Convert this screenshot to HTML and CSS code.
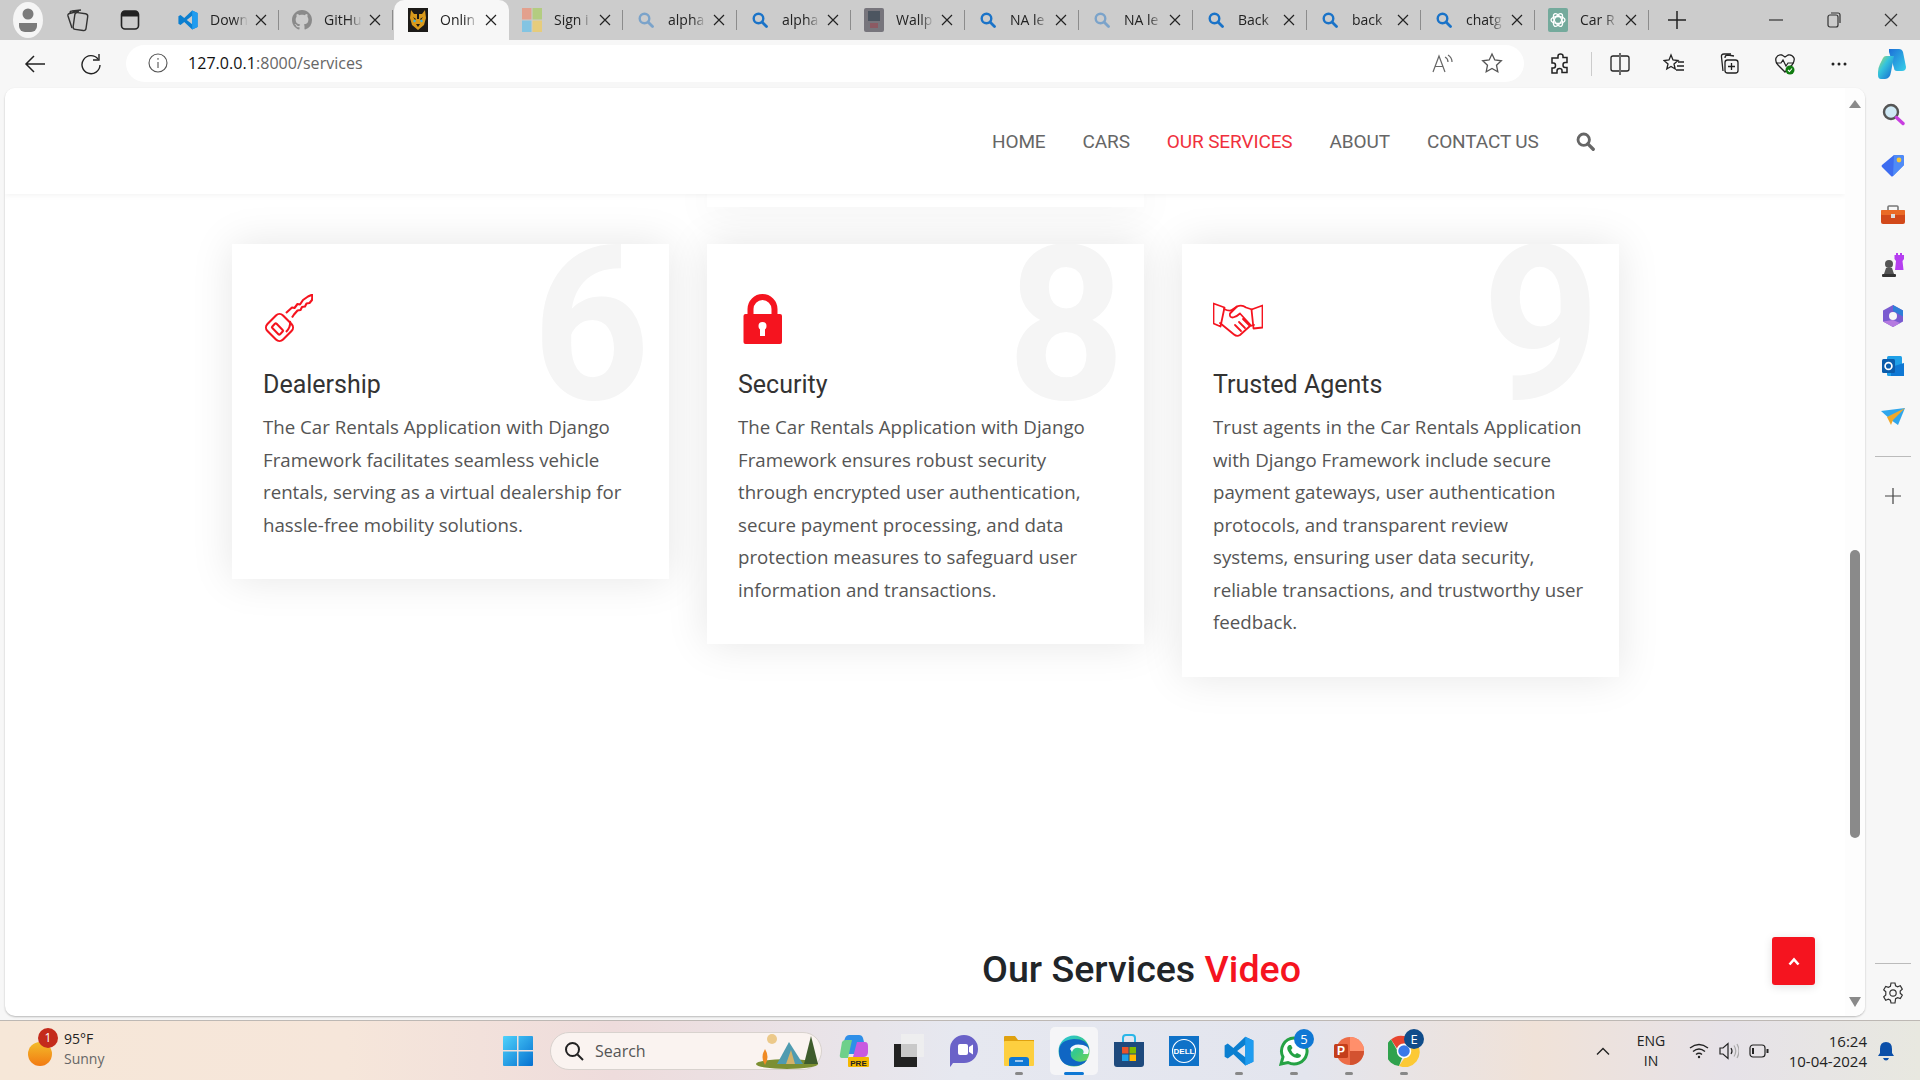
FILE: index.html
```html
<!DOCTYPE html>
<html>
<head>
    <title>Our Services</title>
    <meta charset="utf-8">
    <link rel="stylesheet" href="styles.css">
</head>
<body>
    <svg class="sprites" width="0" height="0">
        <symbol id="i-vscode" viewBox="0 0 24 24">
            <path fill="#0b7fd0" fill-rule="evenodd" d="M17 0.5 7.5 9.5 3 6 0.5 7.5v9L3 18l4.500-3.500 9.500 9 6.500-3v-17zM17 7l-6.500 5 6.500 5z"/>
            <path fill="#1f9cf0" d="M17 0.500l6.500 3v17l-6.500 3z"/>
        </symbol>
        <symbol id="i-github" viewBox="0 0 16 16">
            <path fill="#8a8a8a" d="M8 0C3.58 0 0 3.58 0 8c0 3.54 2.29 6.53 5.47 7.59.4.07.55-.17.55-.38 0-.19-.01-.82-.01-1.490-2.010.37-2.530-.49-2.690-.94-.09-.23-.48-.94-.82-1.130-.28-.15-.68-.52-.01-.53.63-.01 1.080.58 1.230.82.72 1.210 1.870.87 2.330.66.07-.52.28-.87.51-1.070-1.780-.2-3.640-.89-3.640-3.950 0-.87.31-1.590.82-2.150-.08-.2-.36-1.020.08-2.120 0 0 .67-.21 2.200.82.64-.18 1.320-.27 2-.27s1.360.09 2 .27c1.530-1.040 2.200-.82 2.200-.82.44 1.100.16 1.920.08 2.120.51.56.82 1.270.82 2.150 0 3.070-1.870 3.750-3.650 3.950.29.25.54.73.54 1.480 0 1.070-.01 1.930-.01 2.200 0 .21.15.46.55.38A8.010 8.010 0 0016 8c0-4.420-3.580-8-8-8z"/>
        </symbol>
        <symbol id="i-tiger" viewBox="0 0 20 24">
            <rect width="20" height="24" fill="#1c1a18"/>
            <path fill="#d99a1c" d="M3 2l3 4h8l3-4 1 8-2 7-6 5-6-5-2-7z"/>
            <path fill="#1c1a18" d="M9 6h2v5H9zM5 9l3 2-1 1zM15 9l-3 2 1 1zM8 16h4l-2 3z"/>
            <circle cx="6.500" cy="13" r="1.200" fill="#37b4e8"/>
            <circle cx="13.500" cy="13" r="1.200" fill="#37b4e8"/>
        </symbol>
        <symbol id="i-ms" viewBox="0 0 20 24">
            <rect x="0" y="0" width="9.500" height="11.500" fill="#e3a08d"/>
            <rect x="10.500" y="0" width="9.500" height="11.500" fill="#b3cc80"/>
            <rect x="0" y="12.500" width="9.500" height="11.500" fill="#83c4e2"/>
            <rect x="10.500" y="12.500" width="9.500" height="11.500" fill="#e6cc7c"/>
        </symbol>
        <symbol id="i-glass" viewBox="0 0 16 16">
            <circle cx="6.500" cy="6.500" r="4.800" fill="none" stroke="currentColor" stroke-width="2.400"/>
            <path d="M10 10l4.500 4.500" stroke="currentColor" stroke-width="2.800" stroke-linecap="round"/>
        </symbol>
        <symbol id="i-wall" viewBox="0 0 20 24">
            <rect width="20" height="24" rx="2" fill="#77757c"/>
            <rect x="4" y="3" width="12" height="10" fill="#4c5560"/>
            <rect x="6" y="15" width="8" height="5" fill="#8c5a63"/>
        </symbol>
        <symbol id="i-gpt" viewBox="0 0 20 24">
            <rect width="20" height="24" rx="2" fill="#74aa9c"/>
            <g fill="none" stroke="#fff" stroke-width="1.300">
                <ellipse cx="10" cy="12" rx="7" ry="3.500" transform="rotate(60 10 12)"/>
                <ellipse cx="10" cy="12" rx="7" ry="3.500" transform="rotate(-60 10 12)"/>
                <ellipse cx="10" cy="12" rx="7" ry="3.500"/>
            </g>
        </symbol>
        <symbol id="i-close" viewBox="0 0 12 12">
            <path d="M1 1l10 10M11 1 1 11" stroke="#222" stroke-width="1.200"/>
        </symbol>
    </svg>

    <div class="browser">
        <div class="tabstrip">
            <div class="strip-left">
                <span class="avatar">
                    <svg width="22" height="26" viewBox="0 0 22 26"><circle cx="11" cy="7" r="5.500" fill="#7b7b7b"/><path d="M2 16h18v3a6 6 0 0 1-6 6H8a6 6 0 0 1-6-6z" fill="#7b7b7b"/></svg>
                </span>
                <svg class="strip-icon" width="24" height="24" viewBox="0 0 24 24" fill="none" stroke="#333" stroke-width="1.400"><rect x="9" y="5" width="13" height="17" rx="2.500" transform="rotate(8 15 13)"/><path d="M7 20 3 8q-.5-2 1.500-2.500L14 3M5 5q0-2 2-2l9-1"/></svg>
                <svg class="strip-icon" width="22" height="24" viewBox="0 0 22 24"><rect x="2.500" y="3" width="17" height="18" rx="3.500" fill="none" stroke="#222" stroke-width="1.600"/><path d="M2.500 6.500a3.500 3.500 0 0 1 3.500-3.500h10a3.500 3.500 0 0 1 3.500 3.500v2h-17z" fill="#222"/></svg>
            </div>
            <div class="tab"><svg class="favicon"><use href="#i-vscode"/></svg><span class="tab-title">Down</span><svg class="tab-close"><use href="#i-close"/></svg></div>
            <div class="tab"><svg class="favicon"><use href="#i-github"/></svg><span class="tab-title">GitHu</span><svg class="tab-close"><use href="#i-close"/></svg></div>
            <div class="tab tab-active"><svg class="favicon"><use href="#i-tiger"/></svg><span class="tab-title">Onlin</span><svg class="tab-close"><use href="#i-close"/></svg></div>
            <div class="tab"><svg class="favicon"><use href="#i-ms"/></svg><span class="tab-title">Sign i</span><svg class="tab-close"><use href="#i-close"/></svg></div>
            <div class="tab"><svg class="favicon glass faded"><use href="#i-glass"/></svg><span class="tab-title">alpha</span><svg class="tab-close"><use href="#i-close"/></svg></div>
            <div class="tab"><svg class="favicon glass"><use href="#i-glass"/></svg><span class="tab-title">alpha</span><svg class="tab-close"><use href="#i-close"/></svg></div>
            <div class="tab"><svg class="favicon"><use href="#i-wall"/></svg><span class="tab-title">Wallp</span><svg class="tab-close"><use href="#i-close"/></svg></div>
            <div class="tab"><svg class="favicon glass"><use href="#i-glass"/></svg><span class="tab-title">NA le</span><svg class="tab-close"><use href="#i-close"/></svg></div>
            <div class="tab"><svg class="favicon glass faded"><use href="#i-glass"/></svg><span class="tab-title">NA le</span><svg class="tab-close"><use href="#i-close"/></svg></div>
            <div class="tab"><svg class="favicon glass"><use href="#i-glass"/></svg><span class="tab-title">Back</span><svg class="tab-close"><use href="#i-close"/></svg></div>
            <div class="tab"><svg class="favicon glass"><use href="#i-glass"/></svg><span class="tab-title">back</span><svg class="tab-close"><use href="#i-close"/></svg></div>
            <div class="tab"><svg class="favicon glass"><use href="#i-glass"/></svg><span class="tab-title">chatg</span><svg class="tab-close"><use href="#i-close"/></svg></div>
            <div class="tab tab-last"><svg class="favicon"><use href="#i-gpt"/></svg><span class="tab-title">Car R</span><svg class="tab-close"><use href="#i-close"/></svg></div>
            <svg class="new-tab" width="18" height="18" viewBox="0 0 18 18"><path d="M9 0v18M0 9h18" stroke="#222" stroke-width="1.500"/></svg>
            <div class="window-btns">
                <svg width="14" height="14" viewBox="0 0 14 14"><path d="M0 7h14" stroke="#333" stroke-width="1.200"/></svg>
                <svg width="14" height="16" viewBox="0 0 14 16" fill="none" stroke="#333" stroke-width="1.200"><rect x="1" y="3" width="10" height="12" rx="2"/><path d="M4 1h7q2 0 2 2v8"/></svg>
                <svg width="14" height="14" viewBox="0 0 14 14"><path d="M1 1l12 12M13 1 1 13" stroke="#333" stroke-width="1.200"/></svg>
            </div>
        </div>

        <div class="toolbar">
            <svg class="tool-back" width="22" height="20" viewBox="0 0 22 20" fill="none" stroke="#222" stroke-width="1.500"><path d="M21 10H2M10 2l-8 8 8 8"/></svg>
            <svg class="tool-reload" width="22" height="22" viewBox="0 0 22 22" fill="none" stroke="#222" stroke-width="1.400"><path d="M18 6a9 9 0 1 0 2 6"/><path d="M19 1v6h-6"/></svg>
            <div class="addressbar">
                <svg width="20" height="20" viewBox="0 0 20 20" fill="none" stroke="#555" stroke-width="1.100"><circle cx="10" cy="10" r="9"/><path d="M10 9v6M10 5v1.800"/></svg>
                <div class="url"><span class="url-host">127.0.0.1</span>:8000/services</div>
                <svg class="read-aloud" width="22" height="20" viewBox="0 0 22 20" fill="none" stroke="#666" stroke-width="1.200"><path d="M1 19 7 3l6 16M3 13.500h8M13 4q3 1.500 3 5M16 2q4 2.500 4 7"/></svg>
                <svg width="22" height="22" viewBox="0 0 22 22" fill="none" stroke="#555" stroke-width="1.300"><path d="M11 2l2.800 6 6.500.8-4.800 4.400 1.300 6.500-5.800-3.300-5.800 3.300 1.300-6.500L1.700 8.800 8.200 8z"/></svg>
            </div>
            <div class="tool-group">
                <svg width="20" height="22" viewBox="0 0 20 22" fill="none" stroke="#222" stroke-width="1.500"><path d="M8 3q0-2 2.500-2T13 3v1.500h4v5h-2q-2 0-2 2.500t2 2.500h2v5H12v-2q0-2-2.500-2T7 18v2H2v-5h1.500q2 0 2-2.500T3.500 10H2V5h6z"/></svg>
                <span class="tool-sep"></span>
                <svg width="20" height="22" viewBox="0 0 20 22" fill="none" stroke="#222" stroke-width="1.300"><path d="M10 0v22M9 3H3q-2 0-2 2v11q0 2 2 2h6M11 3h6q2 0 2 2v11q0 2-2 2h-6"/></svg>
                <svg width="22" height="22" viewBox="0 0 22 22" fill="none" stroke="#222" stroke-width="1.300"><path d="M8 2l2 5 5 .5-4 3.500 1.200 5L8 13.500 3.800 16 5 11 1 7.500 6 7zM15 9h6M14 13h7M13 17h8"/></svg>
                <svg width="22" height="24" viewBox="0 0 22 24" fill="none" stroke="#222" stroke-width="1.300"><path d="M13 2H6Q3 2 3.500 5L5 19"/><path d="M16 4 10 3Q7 3 7 6"/><rect x="7" y="8" width="13" height="13" rx="2.500"/><path d="M13.500 11v7M10 14.500h7"/></svg>
                <svg width="24" height="24" viewBox="0 0 24 24"><path d="M5 13q-3-3-2-7 2-4 6-3l3 2 3-2q4-1 6 3 1 3-2 7l-7 7z" fill="none" stroke="#222" stroke-width="1.300"/><path d="M3 11h5l2-3 3 6 2-3h6" fill="none" stroke="#222" stroke-width="1.200"/><circle cx="17" cy="18" r="4.500" fill="#107c10"/><path d="M15 18l1.500 1.500 2.500-3" fill="none" stroke="#fff" stroke-width="1.100"/></svg>
                <svg width="18" height="6" viewBox="0 0 18 6" fill="#222"><circle cx="3" cy="3" r="1.500"/><circle cx="9" cy="3" r="1.500"/><circle cx="15" cy="3" r="1.500"/></svg>
            </div>
            <svg class="tool-copilot" width="30" height="32" viewBox="0 0 30 32">
                <defs>
                    <linearGradient id="cop1" x1="0" y1="0" x2="1" y2="1"><stop offset="0" stop-color="#1b6fd8"/><stop offset="1" stop-color="#38d0e8"/></linearGradient>
                    <linearGradient id="cop2" x1="0" y1="0" x2="1" y2="1"><stop offset="0" stop-color="#b8dc5c"/><stop offset=".4" stop-color="#35c4dc"/><stop offset="1" stop-color="#1560d0"/></linearGradient>
                </defs>
                <path d="M12 1h10q3 0 4 3l3 15q0 4-4 4h-5q-3 0-3-3L12 4q0-3 0-3z" fill="url(#cop1)"/>
                <path d="M9 8h8l-3 16q-1 7-6 7H4q-3 0-3-4V24q0-4 2-8l3-6q1-2 3-2z" fill="url(#cop2)"/>
            </svg>
        </div>

        <div class="middle">
            <div class="viewport">
                <div class="page">
                    <nav class="navbar">
                        <a>HOME</a>
                        <a>CARS</a>
                        <a class="active">OUR SERVICES</a>
                        <a>ABOUT</a>
                        <a>CONTACT US</a>
                        <svg class="nav-search"><use href="#i-glass"/></svg>
                    </nav>
                    <div class="service-row stub-row">
                        <div class="card-stub"></div>
                    </div>
                    <div class="service-row">
                        <div class="service-card">
                            <span class="service-num">6</span>
                            <svg class="service-icon" viewBox="0 0 50 50" fill="none" stroke="#f5141f" stroke-width="2.100" stroke-linejoin="round">
                                <rect x="5.500" y="22.500" width="22" height="22" rx="5" transform="rotate(45 16.500 33.500)"/>
                                <rect x="9" y="32" width="11" height="6" rx="1.200" transform="rotate(45 14.500 35)"/>
                                <path d="M27 27q1 6-4 11"/>
                                <path d="M23 19l6-5.500 2.500.5 3-4 2.500.5 3-4.500L45 2.500 49.500.5 49 6l-2.500 3-3 .5-1.500 3-3 .5-1.500 3-3 .5-3.500 4-2 3"/>
                            </svg>
                            <h3>Dealership</h3>
                            <p>The Car Rentals Application with Django Framework facilitates seamless vehicle rentals, serving as a virtual dealership for hassle-free mobility solutions.</p>
                        </div>
                        <div class="service-card">
                            <span class="service-num">8</span>
                            <svg class="service-icon" viewBox="0 0 50 50">
                                <path d="M12.500 20v-5a12 12 0 0 1 24 0v5" fill="none" stroke="#f5141f" stroke-width="6"/>
                                <rect x="5.500" y="20" width="38.500" height="30" rx="2" fill="#f5141f"/>
                                <circle cx="24.500" cy="32" r="4" fill="#fff"/>
                                <rect x="22" y="33" width="5" height="9" fill="#fff"/>
                            </svg>
                            <h3>Security</h3>
                            <p>The Car Rentals Application with Django Framework ensures robust security through encrypted user authentication, secure payment processing, and data protection measures to safeguard user information and transactions.</p>
                        </div>
                        <div class="service-card">
                            <span class="service-num">9</span>
                            <svg class="service-icon" viewBox="0 0 50 50" fill="none" stroke="#f5141f" stroke-width="1.800" stroke-linejoin="round" stroke-linecap="round">
                                <path d="M0.500 9.500l11 4-4 19-7-3zM49.500 11.500l-11 4 2 19 9-1z"/>
                                <path d="M11 15q4 2 7 1.500l6-4q5-2 9 1l6 2M41 31l-4 1-10 9q-3 2-6-.5L7 29"/>
                                <path d="M24 12.500l-7 7q-1 4 3 4 4-1 7-4l11 12M22 31l6 6M26 28l6 6M30 25l6 6"/>
                            </svg>
                            <h3>Trusted Agents</h3>
                            <p>Trust agents in the Car Rentals Application with Django Framework include secure payment gateways, user authentication protocols, and transparent review systems, ensuring user data security, reliable transactions, and trustworthy user feedback.</p>
                        </div>
                    </div>
                    <h2 class="section-title">Our Services <span>Video</span></h2>
                </div>
                <div class="scrollbar">
                    <span class="arrow-up"></span>
                    <span class="thumb"></span>
                    <span class="arrow-down"></span>
                </div>
                <a class="back-top">
                    <svg width="12" height="9" viewBox="0 0 12 9"><path d="M1.500 7.500 6 2.500l4.500 5" fill="none" stroke="#fff" stroke-width="2.600"/></svg>
                </a>
            </div>

            <div class="sidebar">
                <span class="side-item"><svg width="24" height="24" viewBox="0 0 24 24"><circle cx="10" cy="10" r="7" fill="#cfe9f5" stroke="#555" stroke-width="2.400"/><path d="M15.500 15.500 22 21.500" stroke="#c83ee0" stroke-width="3.400" stroke-linecap="round"/></svg></span>
                <span class="side-item"><svg width="24" height="24" viewBox="0 0 24 24"><path d="M13 2h8q2 0 2 2v8L12 23q-1 1-2 0L1 14q-1-1 0-2z" fill="#3d6cf0"/><path d="M13 2h8q2 0 2 2v8L12 23z" fill="#4f8bf7"/><circle cx="18" cy="7" r="2.400" fill="#f6c83a"/></svg></span>
                <span class="side-item"><svg width="26" height="20" viewBox="0 0 26 20"><path d="M8 5V2q0-1 1-1h8q1 0 1 1v3" fill="none" stroke="#777" stroke-width="1.600"/><rect x="1" y="5" width="24" height="14" rx="2" fill="#d2491a"/><rect x="1" y="5" width="24" height="5" rx="1" fill="#ea6a26"/><rect x="11" y="9" width="4" height="4" fill="#ddd"/></svg></span>
                <span class="side-item"><svg width="24" height="26" viewBox="0 0 24 26"><path d="M15 1h2v2h2V1h2v2h2v4l-1.500 2 1 9H14l1-9L13.500 7V3H15z" fill="#b53ef0"/><circle cx="8" cy="12" r="4" fill="#555"/><path d="M5 16h6l2 6H3z" fill="#555"/><rect x="1" y="22" width="14" height="3" rx="1" fill="#333"/></svg></span>
                <span class="side-item"><svg width="22" height="24" viewBox="0 0 22 24"><path d="M11 1l10 5.500v11L11 23 1 17.500v-11z" fill="#7a5bd0"/><path d="M11 1l10 5.500v6L11 7z" fill="#2f7fd8"/><path d="M1 17.500 11 23l7-4-7-3z" fill="#b57ae0"/><circle cx="11" cy="12" r="4" fill="#f7f7f7"/></svg></span>
                <span class="side-item"><svg width="22" height="22" viewBox="0 0 22 22"><rect x="5" y="1" width="15" height="20" rx="1.500" fill="#1fa0e8"/><path d="M9 12l13-4v13H9z" fill="#0f78d4"/><rect x="0" y="4" width="13" height="14" rx="1.500" fill="#0b5cab"/><circle cx="6.500" cy="11" r="3.400" fill="none" stroke="#fff" stroke-width="1.700"/></svg></span>
                <span class="side-item"><svg width="24" height="18" viewBox="0 0 24 18"><path d="M0 3 24 0 17 17 10 12z" fill="#2fa6ec"/><path d="M24 0 6 9l4 8 2-5z" fill="#f0a82a"/></svg></span>
                <span class="side-sep side-sep-top"></span>
                <svg class="side-plus" width="16" height="16" viewBox="0 0 16 16"><path d="M8 0v16M0 8h16" stroke="#444" stroke-width="1.200"/></svg>
                <span class="side-spacer"></span>
                <span class="side-sep"></span>
                <svg class="side-gear" width="22" height="22" viewBox="0 0 22 22" fill="none" stroke="#333" stroke-width="1.200"><circle cx="11" cy="11" r="3.200"/><path d="M9 1h4l.6 2.800 2 1 2.700-1 2 3.400-2.100 1.900v2.200l2.100 1.900-2 3.400-2.700-1-2 1L13 21H9l-.6-2.800-2-1-2.700 1-2-3.400 2.100-1.900V9.700L1.700 7.800l2-3.400 2.700 1 2-1z"/></svg>
            </div>
        </div>

        <div class="taskbar">
            <div class="weather">
                <span class="sun"><span class="sun-badge">1</span></span>
                <div class="weather-text">
                    <span>95°F</span>
                    <span class="weather-sub">Sunny</span>
                </div>
            </div>
            <svg class="win-logo" width="30" height="30" viewBox="0 0 30 30">
                <defs><linearGradient id="win" x1="0" y1="0" x2="1" y2="1"><stop offset="0" stop-color="#4fd2fb"/><stop offset="1" stop-color="#0570d0"/></linearGradient></defs>
                <path fill="url(#win)" d="M0 1q0-1 1-1h13v14H0zM15.500 0H29q1 0 1 1v13H15.500zM0 15.500h14V30H1q-1 0-1-1zM15.500 15.500H30V29q0 1-1 1H15.500z"/>
            </svg>
            <div class="task-search">
                <svg width="20" height="20" viewBox="0 0 20 20" fill="none" stroke="#222" stroke-width="2"><circle cx="8.500" cy="8.500" r="6.500"/><path d="M13.500 13.500 19 19"/></svg>
                <span>Search</span>
                <svg class="camp" width="64" height="36" viewBox="0 0 64 36">
                    <ellipse cx="32" cy="31" rx="31" ry="5" fill="#7c8f32"/>
                    <circle cx="17" cy="6" r="5" fill="#ecc98a"/>
                    <path d="M22 31 34 9l14 22z" fill="#4f9bb0"/>
                    <path d="M31 31 36 17l4 14z" fill="#d2b26a"/>
                    <path d="M56 3l7 28H49z" fill="#3f5c2c"/>
                    <path d="M10 32q-5-8 0-16 5 8 0 16z" fill="#f08a24"/>
                </svg>
            </div>
            <div class="task-apps">
                <span class="app">
                    <svg width="30" height="34" viewBox="0 0 30 34"><path d="M10 1h10q3 0 4 3l4 16H6L5 8q1-7 5-7z" fill="#2f8fe8"/><path d="M3 8q1-2 4-2h6L9 24H3q-3 0-2-4z" fill="#6ed08a"/><path d="M18 8h8q3 0 3 4v6q0 5-5 5H14z" fill="#c85ae0"/><rect x="9" y="23" width="21" height="10" rx="1" fill="#f5b800"/><text x="19.500" y="31.500" class="pre-tag">PRE</text></svg>
                </span>
                <span class="app">
                    <svg width="30" height="34" viewBox="0 0 30 34"><rect x="0" y="10" width="23" height="23" fill="#222"/><rect x="7" y="0" width="23" height="23" fill="#eee" opacity=".85"/><rect x="7" y="10" width="16" height="13" fill="#c9c9c9"/></svg>
                </span>
                <span class="app">
                    <svg width="30" height="34" viewBox="0 0 30 34"><path d="M15 1a14 14 0 0 1 0 28H4q-2 3-3 4V15A14 14 0 0 1 15 1z" fill="#6a62c8"/><rect x="9" y="10" width="10" height="11" rx="2" fill="#fff"/><path d="M20 13l4-2.500v10L20 18z" fill="#fff"/></svg>
                </span>
                <span class="app app-dot">
                    <svg width="30" height="32" viewBox="0 0 30 32"><path d="M0 2q0-1 1-1h10l3 4h16v4H0z" fill="#dfa10f"/><rect y="6" width="30" height="25" rx="1" fill="#fdcf3f"/><path d="M5 25q0-3 3-3h14q3 0 3 3v6H5z" fill="#0f78d4"/><path d="M11 26h8" stroke="#fff" stroke-width="1.200"/></svg>
                </span>
                <span class="app app-current">
                    <svg width="32" height="34" viewBox="0 0 32 34">
                        <defs><linearGradient id="edge" x1="0" y1="0" x2="1" y2="1"><stop offset="0" stop-color="#2bc3e0"/><stop offset=".55" stop-color="#36c98c"/><stop offset="1" stop-color="#7ed64a"/></linearGradient></defs>
                        <circle cx="16" cy="17" r="15.500" fill="url(#edge)"/>
                        <path d="M1 17q0 15 15 15 9 0 13-6-6 3-11 1-7-3-5-10 2-4 7-4 7 0 5 7 6-1 6-6Q29 5 16 5 1 6 1 17z" fill="#0f66c4"/>
                        <path d="M14 18q2-5 7-4 6 1 4 6h5q3-7-5-9-10-2-13 4z" fill="#fff" opacity=".95"/>
                    </svg>
                    <span class="current-bar"></span>
                </span>
                <span class="app">
                    <svg width="30" height="34" viewBox="0 0 30 34"><path d="M9 8V4q0-3 3-3h6q3 0 3 3v4" fill="none" stroke="#2ab6e8" stroke-width="2"/><path d="M0 8h30v22q0 3-3 3H3q-3 0-3-3z" fill="#1e4a7d"/><rect x="8" y="13" width="6.500" height="6.500" fill="#e8532b"/><rect x="15.500" y="13" width="6.500" height="6.500" fill="#7fba00"/><rect x="8" y="20.500" width="6.500" height="6.500" fill="#1fa0e8"/><rect x="15.500" y="20.500" width="6.500" height="6.500" fill="#ffb900"/></svg>
                </span>
                <span class="app">
                    <svg width="30" height="30" viewBox="0 0 30 30"><rect width="30" height="30" fill="#0f72c8"/><circle cx="15" cy="15" r="11.500" fill="none" stroke="#fff" stroke-width="1.100"/><text x="15" y="18" class="dell-tag">DELL</text></svg>
                </span>
                <span class="app app-dot">
                    <svg width="30" height="32"><use href="#i-vscode"/></svg>
                </span>
                <span class="app app-dot">
                    <svg width="32" height="32" viewBox="0 0 32 32"><path d="M16 3a13 13 0 1 1-6 24.500L3 29l2-7A13 13 0 0 1 16 3z" fill="#fff" stroke="#25a244" stroke-width="3"/><path d="M11 10q-3 2-1 6 3 6 9 7 4 0 4-3l-4-2-2 1.500q-3-1.500-4-4.500l1.500-2L13 10z" fill="#25a244"/></svg>
                    <span class="app-badge app-badge-blue">5</span>
                </span>
                <span class="app app-dot">
                    <svg width="30" height="32" viewBox="0 0 30 32"><circle cx="16" cy="16" r="14" fill="#ed6c47"/><path d="M16 2a14 14 0 0 1 14 14H16z" fill="#ff8f6b"/><path d="M16 16h14a14 14 0 0 1-14 14z" fill="#d35230"/><rect x="0" y="9" width="14" height="14" rx="1.500" fill="#c43e1c"/><text x="7" y="20" class="ppt-tag">P</text></svg>
                </span>
                <span class="app app-dot">
                    <svg width="32" height="32" viewBox="0 0 32 32"><path d="M16 1a15 15 0 0 1 13 7.500H16a7.500 7.500 0 0 0-7 5L3 4.500A15 15 0 0 1 16 1z" fill="#e8452f"/><path d="M3 4.500l6.500 11.500a7 7 0 0 0 5 6L11 31A15 15 0 0 1 3 4.500z" fill="#30a24d"/><path d="M29 8.500A15 15 0 0 1 11 31l6-9a7 7 0 0 0 5-7 7 7 0 0 0-2-6.500z" fill="#fcc934"/><circle cx="16" cy="16" r="6.500" fill="#3a78e8" stroke="#fff" stroke-width="1.500"/></svg>
                    <span class="app-badge app-badge-navy">E</span>
                </span>
            </div>
            <div class="tray">
                <svg width="14" height="8" viewBox="0 0 14 8" fill="none" stroke="#222" stroke-width="1.400"><path d="M1 7.500 7 1.500l6 6"/></svg>
                <div class="lang"><span>ENG</span><span>IN</span></div>
                <svg class="tray-wifi" width="20" height="16" viewBox="0 0 20 16" fill="none" stroke="#222" stroke-width="1.400"><path d="M1 5q9-7 18 0M4 8.500q6-5 12 0M7 11.500q3-2.500 6 0"/><circle cx="10" cy="14" r="1.200" fill="#222" stroke="none"/></svg>
                <svg class="tray-vol" width="20" height="18" viewBox="0 0 20 18" fill="none" stroke="#222" stroke-width="1.200"><path d="M1 6h3l5-4.500v15L4 12H1z"/><path d="M12 6q2 3 0 6"/><path d="M15 3.500q3.500 5.500 0 11M18 2q4 7 0 14" stroke="#aaa"/></svg>
                <svg class="tray-bat" width="20" height="14" viewBox="0 0 20 14" fill="none" stroke="#222" stroke-width="1.200"><rect x="1" y="1" width="15" height="12" rx="3"/><path d="M4 4v6" stroke-width="2"/><path d="M18.500 5v4" stroke-width="2"/></svg>
                <div class="clock"><span>16:24</span><span>10-04-2024</span></div>
                <svg class="tray-bell" width="18" height="20" viewBox="0 0 18 20"><path d="M9 1q6 0 6 7v4l2 3H1l2-3V8q0-7 6-7z" fill="#0b4fa8"/><path d="M6 17h6q-1 2.500-3 2.500T6 17z" fill="#0b4fa8"/></svg>
            </div>
        </div>
    </div>
</body>
</html>
```

FILE: styles.css
```css
*{
    box-sizing: border-box;
}
body{
    margin:0;
    background-color: #F7F7F7;
    font-family: "Open Sans", "Liberation Sans", sans-serif;
    color:#222;
}
.sprites{
    display:block;
    height:0;
    overflow:hidden;
}
.browser{
    width:1920px;
    height:1080px;
    display:flex;
    flex-direction: column;
    overflow:hidden;
}

/* tab strip */
.tabstrip{
    height:40px;
    flex:none;
    background-color: #CCCCCC;
    display:flex;
    align-items: center;
}
.strip-left{
    width:165px;
    flex:none;
    display:flex;
    align-items: center;
    padding-left:13px;
}
.avatar{
    width:30px;
    height:36px;
    flex:none;
    border-radius: 50%;
    background-color: #F5F5F5;
    display:flex;
    align-items: center;
    justify-content: center;
    margin-right:22px;
}
.strip-icon{
    flex:none;
    margin-right:30px;
}
.strip-icon:last-child{
    margin-right:0;
}
.tab{
    width:114px;
    height:40px;
    flex:none;
    display:flex;
    align-items: center;
    padding-left:13px;
    position:relative;
    font-size:14px;
}
.tab::after{
    content:"";
    position:absolute;
    right:0;
    top:10px;
    height:20px;
    width:1px;
    background-color: #8C8C8C;
}
.tab-active{
    background-color: #F7F7F7;
    border-radius: 10px 10px 0 0;
    margin-left:1px;
    width:115px;
    padding-left:14px;
}
.tab-active::after{
    display:none;
}
.favicon{
    width:20px;
    height:24px;
    flex:none;
}
.glass{
    width:16px;
    height:16px;
    margin:0 2px;
    color:#1A73C8;
}
.faded{
    opacity:.45;
}
.tab-title{
    width:38px;
    margin-left:12px;
    margin-top:-2px;
    white-space: nowrap;
    overflow:hidden;
    -webkit-mask-image: linear-gradient(to right, #000 65%, transparent);
    mask-image: linear-gradient(to right, #000 65%, transparent);
}
.tab-close{
    width:12px;
    height:12px;
    margin-left:7px;
    flex:none;
}
.new-tab{
    margin-left:19px;
}
.window-btns{
    margin-left:auto;
    width:176px;
    padding:0 22px 0 25px;
    display:flex;
    justify-content: space-between;
    align-items: center;
}

/* toolbar */
.toolbar{
    height:48px;
    flex:none;
    display:flex;
    align-items: center;
    padding-left:24px;
    padding-bottom:0;
}
.tool-back{
    margin-right:34px;
}
.tool-reload{
    margin-right:24px;
}
.addressbar{
    width:1398px;
    height:37px;
    margin-top:-2px;
    background-color: #fff;
    border-radius: 19px;
    display:flex;
    align-items: center;
    padding:0 21px 0 22px;
    gap:20px;
}
.url{
    flex:1;
    font-size:16px;
    color:#666;
    letter-spacing: .05px;
}
.url-host{
    color:#111;
}
.read-aloud{
    margin-right:7px;
}
.tool-group{
    display:flex;
    align-items: center;
    margin-left:26px;
    gap:33px;
}
.tool-sep{
    width:1px;
    height:24px;
    margin:0 -15px 0 -12px;
    background-color: #CCCCCC;
}
.tool-copilot{
    margin-left:29px;
}

/* middle area */
.middle{
    flex:1;
    min-height:0;
    display:flex;
    padding:0 0 4px 5px;
}
.viewport{
    flex:1;
    display:flex;
    position:relative;
    background-color: #fff;
    border-radius: 10px 10px 10px 10px;
    box-shadow: 0 1px 2px rgba(0,0,0,.25);
    overflow:hidden;
}
.page{
    flex:1;
    min-width:0;
    overflow:hidden;
    font-family: Roboto, "Liberation Sans", sans-serif;
}
.navbar{
    height:106px;
    display:flex;
    align-items: center;
    padding-left:987px;
    gap:37px;
    background-color: #fff;
    box-shadow: 0 1px 6px rgba(0,0,0,.06);
    position:relative;
    z-index:2;
    font-size:19px;
    color:#666;
    letter-spacing: -.12px;
}
.navbar .active{
    color:#F0303C;
}
.nav-search{
    width:19px;
    height:19px;
    color:#666;
}
.service-row{
    display:grid;
    grid-template-columns: repeat(3, 437px);
    column-gap:38px;
    padding-left:227px;
    align-items: start;
}
.stub-row{
    margin-bottom:37px;
}
.card-stub{
    grid-column:2;
    height:13px;
    background-color: #fff;
    box-shadow: 0 0 40px rgba(0,0,0,.1);
}
.service-card{
    position:relative;
    background-color: #fff;
    padding:50px 31px 38px;
    box-shadow: 0 0 40px rgba(0,0,0,.1);
    overflow:hidden;
}
.service-num{
    position:absolute;
    top:0;
    right:19px;
    font-size:216px;
    line-height:164px;
    font-weight:700;
    color:#F5F5F5;
    transform: scaleX(.95);
    transform-origin: right center;
}
.service-icon{
    display:block;
    position:relative;
    width:50px;
    height:50px;
}
.service-card h3{
    position:relative;
    margin:23px 0 0;
    font-size:25px;
    line-height:36px;
    font-weight:400;
    color:#333;
}
.service-card p{
    position:relative;
    margin:8px 0 0;
    font-family: "Open Sans", "Liberation Sans", sans-serif;
    font-size:18.7px;
    line-height:32.5px;
    color:#555;
}
.section-title{
    margin:269px 0 0;
    padding-left:977px;
    font-size:37.6px;
    line-height:46px;
    font-weight:500;
    color:#212529;
    white-space: nowrap;
}
.section-title span{
    color:#F5141F;
}
.scrollbar{
    width:20px;
    flex:none;
    background-color: #FDFDFD;
    display:flex;
    flex-direction: column;
    align-items: center;
    padding-top:12px;
}
.arrow-up{
    width:0;
    height:0;
    border-left:6px solid transparent;
    border-right:6px solid transparent;
    border-bottom:8px solid #8A8A8A;
}
.thumb{
    width:10px;
    height:288px;
    margin-top:442px;
    background-color: #8A8A8A;
    border-radius: 5px;
}
.arrow-down{
    width:0;
    height:0;
    margin-top:159px;
    border-left:6px solid transparent;
    border-right:6px solid transparent;
    border-top:10px solid #8A8A8A;
}
.back-top{
    position:absolute;
    left:1767px;
    top:849px;
    width:43px;
    height:48px;
    background-color: #F5141F;
    border-radius: 3px;
    display:flex;
    align-items: center;
    justify-content: center;
    box-shadow: 0 2px 10px rgba(0,0,0,.12);
}

/* edge sidebar */
.sidebar{
    width:55px;
    flex:none;
    display:flex;
    flex-direction: column;
    align-items: center;
    padding-top:1px;
}
.side-item{
    height:50.4px;
    flex:none;
    display:flex;
    align-items: center;
    justify-content: center;
}
.side-sep{
    width:36px;
    height:1px;
    flex:none;
    background-color: #BBBBBB;
}
.side-sep-top{
    margin-top:14px;
}
.side-plus{
    flex:none;
    margin-top:31px;
}
.side-spacer{
    flex:1;
}
.side-gear{
    flex:none;
    margin-top:18px;
    margin-bottom:12px;
}

/* windows taskbar */
.taskbar{
    height:60px;
    flex:none;
    display:flex;
    align-items: center;
    border-top:1px solid #BDB8B4;
    background: linear-gradient(90deg, #F6E7D8 0%, #F6E6DA 18%, #EEDCDC 32%, #E6E8F0 50%, #E3E5EE 68%, #F0E2D8 80%, #E6E2E8 90%, #E8E8E0 100%);
}
.weather{
    width:503px;
    flex:none;
    display:flex;
    align-items: center;
    padding-left:28px;
}
.sun{
    width:24px;
    height:24px;
    border-radius: 50%;
    background: linear-gradient(#F3BC2A, #F27A12);
    position:relative;
    margin-top:6px;
}
.sun-badge{
    position:absolute;
    left:10px;
    top:-14px;
    width:20px;
    height:20px;
    border-radius: 50%;
    background-color: #C42B1C;
    color:#fff;
    font-size:12px;
    line-height:20px;
    text-align: center;
}
.weather-text{
    margin-left:12px;
    margin-top:-3px;
    display:flex;
    flex-direction: column;
    font-size:14px;
    line-height:20px;
}
.weather-sub{
    color:#666;
}
.win-logo{
    flex:none;
}
.task-search{
    width:272px;
    height:38px;
    flex:none;
    margin-left:17px;
    background-color: #FAF3F0;
    border:1px solid #D8D2CE;
    border-radius: 19px;
    display:flex;
    align-items: center;
    padding-left:13px;
    font-size:16px;
    color:#555;
    position:relative;
}
.task-search span{
    margin-left:11px;
}
.camp{
    position:absolute;
    right:2px;
    top:0;
}
.task-apps{
    display:flex;
    margin-left:4px;
    flex:none;
}
.app{
    width:55px;
    height:48px;
    display:flex;
    align-items: center;
    justify-content: center;
    position:relative;
}
.app-dot::after,
.current-bar{
    content:"";
    position:absolute;
    bottom:0;
    left:50%;
    width:8px;
    height:3px;
    margin-left:-4px;
    border-radius: 2px;
    background-color: #888;
}
.app-current{
    width:48px;
    margin:0 3.5px;
    background-color: #F5F5F7;
    border-radius: 5px;
}
.current-bar{
    width:20px;
    margin-left:-10px;
    background-color: #0F78D4;
}
.app-badge{
    position:absolute;
    top:2px;
    left:28px;
    width:20px;
    height:20px;
    border-radius: 50%;
    color:#fff;
    font-size:13px;
    line-height:20px;
    text-align: center;
}
.app-badge-blue{
    background-color: #0F78D4;
}
.app-badge-navy{
    background-color: #0F4C8A;
}
.pre-tag{
    font-family: "Liberation Sans", sans-serif;
    font-size:8px;
    font-weight:700;
    text-anchor: middle;
    fill:#222;
}
.dell-tag{
    font-family: "Liberation Sans", sans-serif;
    font-size:8px;
    font-weight:700;
    text-anchor: middle;
    fill:#fff;
}
.ppt-tag{
    font-family: "Liberation Sans", sans-serif;
    font-size:12px;
    font-weight:700;
    text-anchor: middle;
    fill:#fff;
}
.tray{
    flex:1;
    display:flex;
    align-items: center;
    padding-left:165px;
    font-size:14px;
}
.lang{
    display:flex;
    flex-direction: column;
    align-items: center;
    line-height:20px;
    margin-left:24px;
    width:34px;
}
.tray-wifi{
    margin-left:21px;
}
.tray-vol{
    margin-left:10px;
}
.tray-bat{
    margin-left:10px;
}
.clock{
    width:88px;
    margin-left:10px;
    font-size:15px;
    display:flex;
    flex-direction: column;
    align-items: flex-end;
    line-height:20px;
    white-space: nowrap;
}
.tray-bell{
    margin-left:10px;
}
```
